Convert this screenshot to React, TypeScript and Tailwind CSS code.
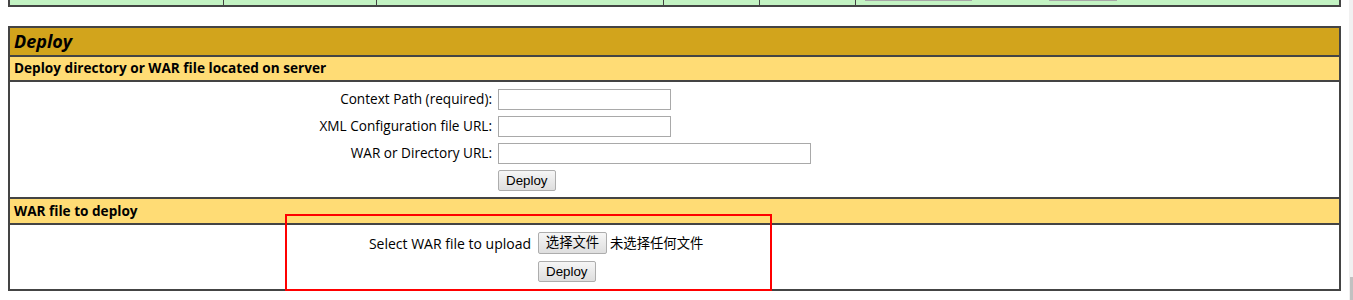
import React from "react";

const body = "font-['Open_Sans','Noto_Sans_CJK_SC',sans-serif]";
const btn =
  "font-['Liberation_Sans','Noto_Sans_CJK_SC',sans-serif] text-[13.33px] leading-none text-black bg-gradient-to-b from-[#f6f6f6] to-[#dedede] border border-[#adadad] rounded-[2px]";

function TopRow() {
  // tail of the application list table above the Deploy section
  const cols = ["w-[214px]", "w-[153px]", "w-[287px]", "w-[96px]", "w-[96px]"];
  return (
    <div className="flex h-[7px] w-[1333px] border-x-2 border-b-2 border-[#444] bg-[#c3f3c3]">
      {cols.map((c, i) => (
        <div key={i} className={`${c} h-full border-r border-[#444]`} />
      ))}
      <div className="flex flex-1 items-start">
        <div className="ml-[9px] h-[1px] w-[107px] bg-[#a8a8a8]" />
        <div className="ml-[77px] h-[1px] w-[68px] bg-[#a8a8a8]" />
      </div>
    </div>
  );
}

function Field({ label, w }: { label: string; w: string }) {
  return (
    <div className="flex h-[27px] items-start">
      <div className="flex h-[21px] w-[482px] items-center justify-end text-[13.6px] text-black">{label}</div>
      <input type="text" className={`ml-[6px] h-[21px] ${w} border border-[#a9a9a9] bg-white`} />
    </div>
  );
}

export default function App() {
  return (
    <div className={`flex h-[300px] w-[1353px] overflow-hidden bg-white ${body}`}>
      <div className="relative flex-1 pl-2">
        <TopRow />

        <div className="mt-[19px] w-[1333px] border-2 border-[#444]">
          {/* Title */}
          <div className="flex h-[29px] items-center border-b-2 border-[#444] bg-[#d2a41c] pl-[4px] text-[18px] font-bold italic text-black">
            Deploy
          </div>

          <div className="flex h-[25px] items-center border-b-2 border-[#444] bg-[#ffdc75] pl-[4px] text-[13.6px] font-bold text-black">
            Deploy directory or WAR file located on server
          </div>

          <div className="border-b-2 border-[#444] pt-[7px]">
            <Field label="Context Path (required):" w="w-[173px]" />
            <Field label="XML Configuration file URL:" w="w-[173px]" />
            <Field label="WAR or Directory URL:" w="w-[313px]" />
            <div className="flex h-[27px] items-start pl-[488px]">
              <button className={`h-[21px] px-[7px] ${btn}`}>Deploy</button>
            </div>
          </div>

          <div className="flex h-[26px] items-center border-b-2 border-[#444] bg-[#ffdc75] pl-[4px] text-[13.6px] font-bold text-black">
            WAR file to deploy
          </div>

          <div className="h-[64px] pt-[7px]">
            <div className="flex h-[29px] items-start">
              <div className="flex h-[22px] w-[521px] items-center justify-end text-[14px] text-black">
                Select WAR file to upload
              </div>
              <button className={`ml-[7px] h-[22px] w-[69px] ${btn}`}>选择文件</button>
              <span className="ml-[3px] flex h-[22px] items-center font-['Noto_Sans_CJK_SC',sans-serif] text-[13.33px] text-black">
                未选择任何文件
              </span>
            </div>
            <div className="flex h-[28px] items-start pl-[528px]">
              <button className={`h-[21px] px-[7px] ${btn}`}>Deploy</button>
            </div>
          </div>
        </div>

        {/* annotation box */}
        <div className="absolute left-[285px] top-[214px] h-[77px] w-[487px] border-2 border-[#ff0000]" />
      </div>

      {/* scrollbar edge */}
      <div className="flex w-[4px] flex-col justify-end bg-[#f1f1f1]">
        <div className="ml-[1px] h-[23px] bg-[#c1c1c1]" />
      </div>
    </div>
  );
}
